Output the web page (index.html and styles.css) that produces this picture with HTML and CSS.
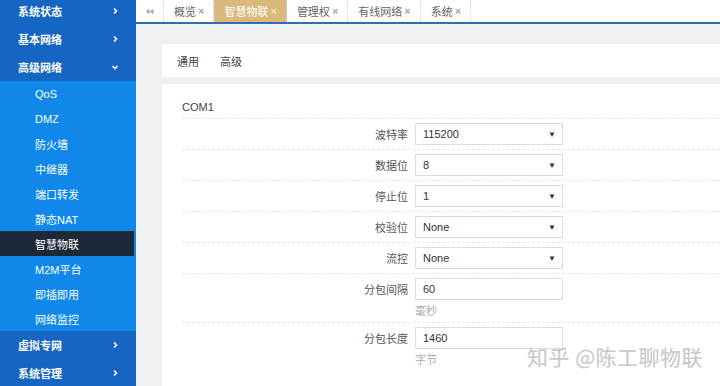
FILE: index.html
```html
<!DOCTYPE html>
<html lang="zh">
<head>
<meta charset="utf-8">
<link rel="stylesheet" href="styles.css">
</head>
<body>
<div class="app">
  <aside class="sidebar">
    <div class="menu-item first"><span>系统状态</span><svg class="chev" viewBox="0 0 8 8"><path d="M3 1.5 L5.5 4 L3 6.5"/></svg></div>
    <div class="menu-item"><span>基本网络</span><svg class="chev" viewBox="0 0 8 8"><path d="M3 1.5 L5.5 4 L3 6.5"/></svg></div>
    <div class="menu-item"><span>高级网络</span><svg class="chev" viewBox="0 0 8 8"><path d="M1.5 3 L4 5.5 L6.5 3"/></svg></div>
    <div class="submenu">
      <div class="sub-item">QoS</div>
      <div class="sub-item">DMZ</div>
      <div class="sub-item">防火墙</div>
      <div class="sub-item">中继器</div>
      <div class="sub-item">端口转发</div>
      <div class="sub-item">静态NAT</div>
      <div class="sub-item active">智慧物联</div>
      <div class="sub-item">M2M平台</div>
      <div class="sub-item">即插即用</div>
      <div class="sub-item">网络监控</div>
    </div>
    <div class="menu-item"><span>虚拟专网</span><svg class="chev" viewBox="0 0 8 8"><path d="M3 1.5 L5.5 4 L3 6.5"/></svg></div>
    <div class="menu-item"><span>系统管理</span><svg class="chev" viewBox="0 0 8 8"><path d="M3 1.5 L5.5 4 L3 6.5"/></svg></div>
  </aside>
  <main class="main">
    <div class="tabbar">
      <div class="tab back"><svg class="dbl" viewBox="0 0 10 8"><path d="M5 0.5 L1 4 L5 7.5 Z M9.5 0.5 L5.5 4 L9.5 7.5 Z"/></svg></div>
      <div class="tab">概览 <b>×</b></div>
      <div class="tab active">智慧物联 <b>×</b></div>
      <div class="tab">管理权 <b>×</b></div>
      <div class="tab">有线网络 <b>×</b></div>
      <div class="tab">系统 <b>×</b></div>
    </div>
    <div class="content">
      <div class="subnav">
        <span>通用</span>
        <span>高级</span>
      </div>
      <div class="panel">
        <div class="section-title">COM1</div>
        <div class="row"><label>波特率</label><div class="select">115200<i>▼</i></div></div>
        <div class="row"><label>数据位</label><div class="select">8<i>▼</i></div></div>
        <div class="row"><label>停止位</label><div class="select">1<i>▼</i></div></div>
        <div class="row"><label>校验位</label><div class="select">None<i>▼</i></div></div>
        <div class="row"><label>流控</label><div class="select">None<i>▼</i></div></div>
        <div class="row"><label>分包间隔</label><div class="input">60</div><div class="help">毫秒</div></div>
        <div class="row"><label>分包长度</label><div class="input">1460</div><div class="help">字节</div></div>
      </div>
    </div>
    <div class="watermark">知乎 @陈工聊物联</div>
  </main>
</div>
</body>
</html>
```

FILE: styles.css
```css
html, body {
  margin: 0;
  padding: 0;
  width: 720px;
  height: 386px;
  overflow: hidden;
  background: #fff;
}
body {
  font-family: "Liberation Sans", "Noto Sans CJK SC", sans-serif;
  font-size: 11px;
  color: #333;
}
.app {
  display: flex;
  height: 386px;
}
.sidebar {
  width: 136px;
  flex: none;
  background: #1565c3;
  display: flex;
  flex-direction: column;
  margin-top: -3px;
}
.menu-item {
  height: 28px;
  flex: none;
  display: flex;
  align-items: center;
  justify-content: space-between;
  padding: 0 17px 0 18px;
  color: #fff;
  font-weight: bold;
  font-size: 11px;
}
.chev {
  width: 8px;
  height: 8px;
  fill: none;
  stroke: #fff;
  stroke-width: 1.6;
}
.submenu {
  background: #0f88e9;
  display: flex;
  flex-direction: column;
  flex: none;
}
.sub-item {
  height: 25px;
  display: flex;
  align-items: center;
  padding-left: 35px;
  color: #fff;
  font-size: 11px;
}
.sub-item.active {
  background: #1e2937;
  margin-right: 2px;
}
.main {
  flex: 1;
  position: relative;
  display: flex;
  flex-direction: column;
  min-width: 0;
}
.tabbar {
  height: 22px;
  flex: none;
  display: flex;
  border-bottom: 2px solid #2f6db5;
  background: #fff;
}
.tab {
  display: flex;
  align-items: center;
  padding: 0 9px 0 10px;
  color: #666;
  border-right: 1px dotted #cfcfcf;
  white-space: nowrap;
}
.tab b {
  margin-left: 2px;
  color: #aaa;
  font-weight: bold;
  font-size: 11px;
}
.tab.back {
  width: 27px;
  padding: 0;
  justify-content: center;
}
.dbl {
  width: 9px;
  height: 7px;
  fill: #aaa;
}
.tab.active {
  background: #dbb97c;
  color: #fff;
}
.tab.active b {
  color: #f3e3c6;
}
.content {
  flex: 1;
  background: #eef1f4;
  padding: 20px 0 0 26px;
  display: flex;
  flex-direction: column;
  gap: 7px;
}
.subnav {
  height: 33px;
  background: #fff;
  display: flex;
  align-items: center;
  gap: 21px;
  padding-left: 15px;
  color: #444;
}
.panel {
  flex: 1;
  background: #fff;
  padding: 14px 0 0 20px;
}
.section-title {
  color: #444;
  height: 20px;
  line-height: 18px;
}
.row {
  display: grid;
  grid-template-columns: 226px 148px;
  column-gap: 7px;
  align-items: center;
  border-top: 1px dashed #e6e6e6;
  padding: 4px 0 4px;
}
.row label {
  text-align: right;
  color: #555;
}
.select, .input {
  height: 20px;
  border: 1px solid #dcdcdc;
  display: flex;
  align-items: center;
  justify-content: space-between;
  padding: 0 6px 0 7px;
  color: #333;
  background: #fff;
}
.select i {
  font-style: normal;
  font-size: 8px;
  color: #333;
}
.help {
  grid-column: 2;
  color: #aaa;
  height: 20px;
  line-height: 22px;
  margin-bottom: -2px;
}
.watermark {
  position: absolute;
  left: 391px;
  top: 341px;
  font-family: "Noto Sans CJK SC", sans-serif;
  font-size: 21px;
  color: #c9c9c9;
  letter-spacing: 0.5px;
  text-shadow: 0 0 1px #eee;
}
```
